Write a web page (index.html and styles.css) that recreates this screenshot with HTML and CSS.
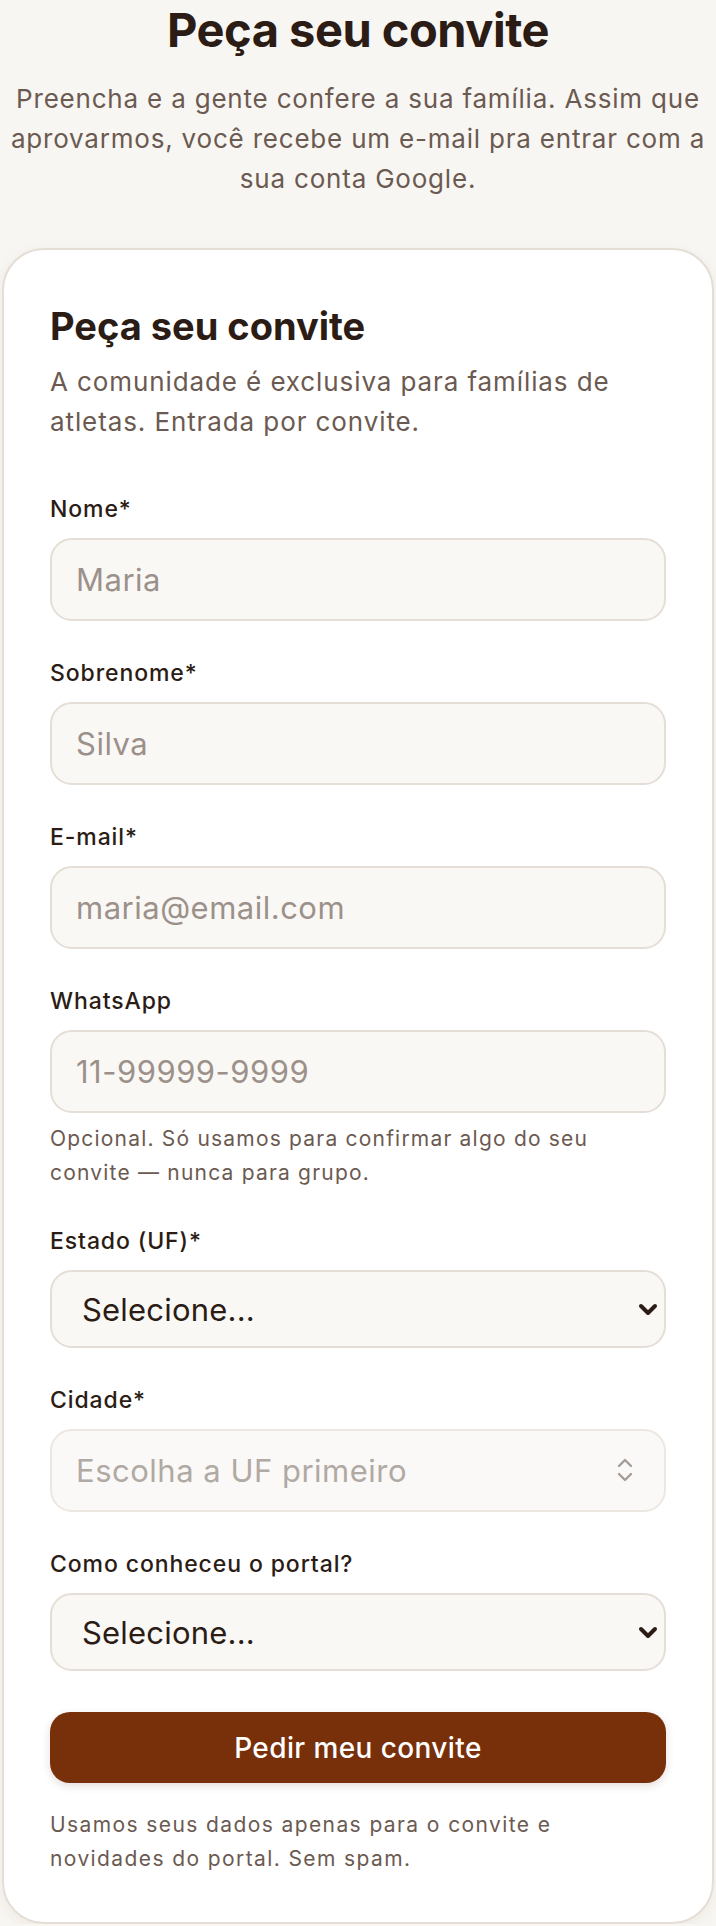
FILE: index.html
```html
<!DOCTYPE html>
<html lang="pt-BR">
<head>
  <meta charset="UTF-8" />
  <meta name="viewport" content="width=device-width, initial-scale=1.0"/>
  <title>Peça seu convite</title>
  <link rel="stylesheet" href="styles.css">
</head>
<body>

  <header class="intro">
    <h1>Peça seu convite</h1>
    <p>Preencha e a gente confere a sua família. Assim que aprovarmos, você recebe um e-mail pra entrar com a sua conta Google.</p>
  </header>

  <main class="card">
    <h2>Peça seu convite</h2>
    <p class="lead">A comunidade é exclusiva para famílias de atletas. Entrada por convite.</p>

    <form class="invite-form" onsubmit="return false">
      <div class="field">
        <label for="nome">Nome*</label>
        <input id="nome" type="text" placeholder="Maria">
      </div>

      <div class="field">
        <label for="sobrenome">Sobrenome*</label>
        <input id="sobrenome" type="text" placeholder="Silva">
      </div>

      <div class="field">
        <label for="email">E-mail*</label>
        <input id="email" type="email" placeholder="maria@email.com">
      </div>

      <div class="field">
        <label for="whatsapp">WhatsApp</label>
        <input id="whatsapp" type="tel" placeholder="11-99999-9999">
        <p class="hint">Opcional. Só usamos para confirmar algo do seu convite — nunca para grupo.</p>
      </div>

      <div class="field">
        <label for="uf">Estado (UF)*</label>
        <div class="select-wrap">
          <select id="uf">
            <option>Selecione...</option>
            <option>SP</option>
            <option>RJ</option>
            <option>MG</option>
          </select>
          <svg class="select-arrow" width="20" height="13" viewBox="0 0 20 13" fill="none" stroke="currentColor" stroke-width="4" stroke-linecap="round" stroke-linejoin="round">
            <path d="M3 3l7 7 7-7"/>
          </svg>
        </div>
      </div>

      <div class="field">
        <label for="cidade">Cidade*</label>
        <div class="combo">
          <input id="cidade" type="text" placeholder="Escolha a UF primeiro" disabled>
          <svg class="combo-icon" width="18" height="26" viewBox="0 0 18 26" fill="none" stroke="currentColor" stroke-width="2.4" stroke-linecap="round" stroke-linejoin="round">
            <path d="M3 9l6-6 6 6"/>
            <path d="M3 17l6 6 6-6"/>
          </svg>
        </div>
      </div>

      <div class="field">
        <label for="origem">Como conheceu o portal?</label>
        <div class="select-wrap">
          <select id="origem">
            <option>Selecione...</option>
            <option>Instagram</option>
            <option>Indicação</option>
            <option>Google</option>
          </select>
          <svg class="select-arrow" width="20" height="13" viewBox="0 0 20 13" fill="none" stroke="currentColor" stroke-width="4" stroke-linecap="round" stroke-linejoin="round">
            <path d="M3 3l7 7 7-7"/>
          </svg>
        </div>
      </div>

      <button type="submit" class="submit">Pedir meu convite</button>
    </form>

    <p class="footnote">Usamos seus dados apenas para o convite e novidades do portal. Sem spam.</p>
  </main>

</body>
</html>
```

FILE: styles.css
```css
body {
  font-family: Inter, 'Noto Sans', sans-serif;
  background-color: #f8f6f2;
  color: #2b1c15;
  margin: 0;
  padding: 0;
}

.intro {
  text-align: center;
  padding-top: 3px;
}

.intro h1 {
  font-size: 47px;
  font-weight: 700;
  letter-spacing: -0.5px;
  line-height: 54px;
  margin: 0 0 22px;
}

.intro p {
  font-size: 26px;
  line-height: 40px;
  letter-spacing: 0.8px;
  color: #6b5a51;
  margin: 0 0 49px;
}

.card {
  background: #ffffff;
  border: 2px solid #e5ded6;
  border-radius: 42px;
  margin: 0 2px;
  padding: 54px 46px 46px;
  box-shadow: 0 4px 14px rgba(80, 50, 30, 0.06);
}

.card h2 {
  font-size: 38px;
  font-weight: 700;
  line-height: 44px;
  margin: 0 0 14px;
}

.lead {
  font-size: 26px;
  line-height: 40px;
  letter-spacing: 0.9px;
  color: #6b5a51;
  margin: 0 0 52px;
}

.invite-form {
  display: flex;
  flex-direction: column;
  gap: 37px;
}

.field {
  display: flex;
  flex-direction: column;
}

.field label {
  font-size: 23px;
  font-weight: 500;
  letter-spacing: 0.9px;
  line-height: 30px;
  margin-bottom: 14px;
}

.field input,
.field select {
  box-sizing: border-box;
  width: 100%;
  height: 83px;
  padding: 0 24px;
  font-family: inherit;
  font-size: 31px;
  letter-spacing: 0.5px;
  color: #2b1c15;
  background: #faf8f5;
  border: 2px solid #e5ded6;
  border-radius: 22px;
  outline: none;
}

.field select {
  appearance: none;
  height: 78px;
  padding: 0 48px 0 30px;
  letter-spacing: 0.2px;
}

.field input::placeholder {
  color: #9c918a;
}

.field input:disabled {
  background: #faf9f7;
  border-color: #ece7e1;
}

.field input:disabled::placeholder {
  color: #b1a9a3;
}

.select-wrap,
.combo {
  position: relative;
}

.select-arrow {
  position: absolute;
  right: 8px;
  top: 33px;
  color: #2b1c15;
  pointer-events: none;
}

.combo-icon {
  position: absolute;
  right: 32px;
  top: 28px;
  color: #a69c96;
}

.hint {
  font-size: 21px;
  line-height: 34px;
  letter-spacing: 1.2px;
  color: #6b5a51;
  margin: 9px 0 -1px;
}

.submit {
  margin-top: 4px;
  height: 71px;
  border: none;
  border-radius: 20px;
  background: #78300b;
  color: #ffffff;
  font-family: inherit;
  font-size: 28px;
  font-weight: 500;
  letter-spacing: 0.4px;
  cursor: pointer;
  box-shadow: 0 3px 8px rgba(80, 30, 5, 0.15);
}

.footnote {
  font-size: 21px;
  line-height: 34px;
  letter-spacing: 1.4px;
  color: #6b5a51;
  margin: 25px 0 0;
}
```
